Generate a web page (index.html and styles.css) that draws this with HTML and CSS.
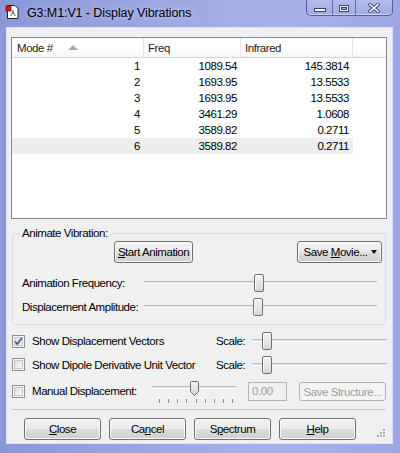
FILE: index.html
```html
<!DOCTYPE html>
<html>
<head>
<meta charset="utf-8">
<title>Display Vibrations</title>
<link rel="stylesheet" href="styles.css">
</head>
<body>
<div class="window">
  <div class="titlebar">
    <svg class="appicon" width="16" height="16" viewBox="0 0 16 16">
      <path d="M2.5 1.5h7.5l3 3v10h-10.5z" fill="#fff" stroke="#222" stroke-width="1"/>
      <path d="M8 8.5v-2.5M8 8.5l-2.5 3.5M8 8.5l2.5 3.5" stroke="#555" stroke-width="1" fill="none"/>
      <circle cx="8" cy="8.5" r="1.2" fill="#777"/>
      <rect x="1" y="2" width="5" height="5" fill="#e3101a" stroke="#8a0000" stroke-width="0.8"/>
    </svg>
    <span class="title">G3:M1:V1 - Display Vibrations</span>
    <div class="caption">
      <div class="cbtn cmin"><span class="g-min"></span></div>
      <div class="cbtn cmax"><span class="g-max"></span></div>
      <div class="cbtn cclose">
        <svg width="12" height="10" viewBox="0 0 12 10">
          <path d="M2 1.5l8 7M10 1.5l-8 7" stroke="#3b4468" stroke-width="3.4" stroke-linecap="square"/>
          <path d="M2 1.5l8 7M10 1.5l-8 7" stroke="#fff" stroke-width="1.6" stroke-linecap="square"/>
        </svg>
      </div>
    </div>
  </div>

  <div class="client">
    <div class="listview">
      <div class="lv-header">
        <div class="hcell c1">Mode #<span class="sort"></span></div>
        <div class="hcell c2">Freq</div>
        <div class="hcell c3">Infrared</div>
        <div class="hcell c4"></div>
      </div>
      <div class="lv-row"><div class="cell c1">1</div><div class="cell c2">1089.54</div><div class="cell c3">145.3814</div></div>
      <div class="lv-row"><div class="cell c1">2</div><div class="cell c2">1693.95</div><div class="cell c3">13.5533</div></div>
      <div class="lv-row"><div class="cell c1">3</div><div class="cell c2">1693.95</div><div class="cell c3">13.5533</div></div>
      <div class="lv-row"><div class="cell c1">4</div><div class="cell c2">3461.29</div><div class="cell c3">1.0608</div></div>
      <div class="lv-row"><div class="cell c1">5</div><div class="cell c2">3589.82</div><div class="cell c3">0.2711</div></div>
      <div class="lv-row sel"><div class="cell c1">6</div><div class="cell c2">3589.82</div><div class="cell c3">0.2711</div></div>
    </div>

    <fieldset class="group">
      <legend>Animate Vibration:</legend>
      <div class="btnrow">
        <button class="btn start"><span><u>S</u>tart Animation</span></button>
        <button class="btn movie"><span>Save <u>M</u>ovie...</span><span class="ddarrow"></span></button>
      </div>
      <div class="srow first">
        <span class="slabel">Animation Frequency:</span>
        <div class="slider"><span class="thumb t1"></span></div>
      </div>
      <div class="srow">
        <span class="slabel">Displacement Amplitude:</span>
        <div class="slider"><span class="thumb t2"></span></div>
      </div>
    </fieldset>

    <div class="options">
      <div class="orow">
        <div class="check">
          <span class="cb">
            <svg width="11" height="11" viewBox="0 0 11 11"><path d="M2 5.5l2.3 2.6l4.6-6" stroke="#4a5d8f" stroke-width="1.7" fill="none"/></svg>
          </span>
          <span>Show Displacement Vectors</span>
        </div>
        <span class="scale">Scale:</span>
        <div class="sslider"><span class="thumb ts"></span></div>
      </div>
      <div class="orow second">
        <div class="check"><span class="cb"></span><span>Show Dipole Derivative Unit Vector</span></div>
        <span class="scale">Scale:</span>
        <div class="sslider"><span class="thumb ts"></span></div>
      </div>
      <div class="mrow">
        <span class="cb"></span>
        <span class="mlabel">Manual Displacement:</span>
        <div class="mslider">
          <div class="mtrack">
            <svg class="pthumb" width="9" height="15" viewBox="0 0 9 15">
              <defs><linearGradient id="pg" x1="0" y1="0" x2="0" y2="1"><stop offset="0" stop-color="#f7f7f7"/><stop offset="1" stop-color="#d3d3d3"/></linearGradient></defs>
              <path d="M0.5 1.5q0-1 1-1h6q1 0 1 1v9l-4 4l-4-4z" fill="url(#pg)" stroke="#6f6f6f"/>
            </svg>
          </div>
          <div class="ticks"><span></span><span></span><span></span><span></span><span></span><span></span><span></span><span></span><span></span></div>
        </div>
        <div class="tbox">0.00</div>
        <button class="btn dis"><span>Save Structure...</span></button>
      </div>
    </div>

    <div class="sep"></div>

    <div class="brow">
      <button class="btn"><span><u>C</u>lose</span></button>
      <button class="btn"><span>Ca<u>n</u>cel</span></button>
      <button class="btn"><span>S<u>p</u>ectrum</span></button>
      <button class="btn"><span><u>H</u>elp</span></button>
      <svg class="grip" width="9" height="9" viewBox="0 0 9 9">
        <g fill="#fff"><rect x="7" y="1" width="2" height="2"/><rect x="4" y="4" width="2" height="2"/><rect x="7" y="4" width="2" height="2"/><rect x="1" y="7" width="2" height="2"/><rect x="4" y="7" width="2" height="2"/><rect x="7" y="7" width="2" height="2"/></g>
        <g fill="#a8acb2"><rect x="6" y="0" width="2" height="2"/><rect x="3" y="3" width="2" height="2"/><rect x="6" y="3" width="2" height="2"/><rect x="0" y="6" width="2" height="2"/><rect x="3" y="6" width="2" height="2"/><rect x="6" y="6" width="2" height="2"/></g>
      </svg>
    </div>
  </div>
</div>
</body>
</html>
```

FILE: styles.css
```css
* { box-sizing: border-box; }
html, body { margin: 0; padding: 0; }
body {
  width: 400px;
  height: 453px;
  overflow: hidden;
  font-family: "Liberation Sans", Arial, sans-serif;
  font-size: 11.5px;
  letter-spacing: -0.45px;
  color: #000;
}
.window {
  width: 400px;
  height: 453px;
  display: flex;
  flex-direction: column;
  background: linear-gradient(90deg, #8a97d9 0%, #9aa6e2 35%, #a8b2eb 70%, #9ca7e3 100%);
}

/* title bar */
.titlebar {
  height: 27px;
  flex-shrink: 0;
  display: flex;
  align-items: flex-start;
}
.appicon { margin: 4px 0 0 5px; flex-shrink: 0; }
.title {
  margin-left: 6px;
  line-height: 27px;
  font-size: 12.5px;
  letter-spacing: -0.1px;
  color: #000;
  text-shadow: 0 0 6px rgba(255,255,255,0.6);
}
.caption {
  margin-left: auto;
  margin-right: 7px;
  height: 16px;
  display: flex;
  border: 1px solid rgba(45, 55, 100, 0.65);
  border-top: none;
  border-radius: 0 0 5px 5px;
  overflow: hidden;
  background: linear-gradient(#b3bcee, #a0aae4);
  box-shadow: inset 0 -1px 0 rgba(255,255,255,0.45);
}
.cbtn {
  display: flex;
  align-items: center;
  justify-content: center;
  height: 15px;
}
.cmin { width: 25px; }
.cmax { width: 23px; border-left: 1px solid rgba(45, 55, 100, 0.55); }
.cclose { width: 37px; border-left: 1px solid rgba(45, 55, 100, 0.55); }
.g-min {
  width: 12px;
  height: 4px;
  margin-top: 5px;
  background: #fff;
  border: 1px solid #3b4468;
}
.g-max {
  width: 10px;
  height: 7px;
  margin-top: 1px;
  border: 1px solid #3b4468;
  box-shadow: inset 0 0 0 1px #fff, inset 0 0 0 2px #3b4468;
  background: #a6b0e8;
}

/* client */
.client {
  margin: 0 7px 0 6px;
  height: 417px;
  flex-shrink: 0;
  background: #f0f0f0;
  border: 1px solid #dde2f3;
  display: flex;
  flex-direction: column;
}

/* list view */
.listview {
  margin: 9px 5px 0 4px;
  height: 182px;
  flex-shrink: 0;
  border: 1px solid #828790;
  background: #fff;
}
.lv-header {
  display: flex;
  height: 20px;
  border-bottom: 1px solid #d5d5d5;
  background: linear-gradient(#ffffff 0%, #ffffff 55%, #f4f5f7 100%);
}
.hcell {
  height: 19px;
  display: flex;
  align-items: center;
  padding-left: 4px;
  border-right: 1px solid #e3e5e8;
  color: #1e1e1e;
}
.hcell.c1 { padding-left: 5px; }
.hcell.c4 { flex: 1; border-right: none; }
.c1 { width: 132px; }
.c2 { width: 97px; }
.c3 { width: 112px; }
.sort {
  width: 0;
  height: 0;
  margin-left: 15px;
  border-left: 5px solid transparent;
  border-right: 5px solid transparent;
  border-bottom: 5px solid #a7a7a7;
}
.lv-row {
  display: flex;
  height: 16px;
  width: 341px;
}
.lv-row.sel { background: #eeeeee; }
.cell {
  line-height: 16px;
  text-align: right;
  padding-right: 4px;
}

/* group */
.group {
  margin: 7px 6px 0 5px;
  padding: 0 3px 5px 9px;
  border: 1px solid #d5dfe5;
  border-radius: 3px;
  min-width: 0;
}
.group legend {
  padding: 0 2px;
  margin-left: -2px;
  line-height: 15px;
}
.btnrow {
  display: flex;
  height: 22px;
}
.btn {
  height: 22px;
  padding: 0;
  font-family: inherit;
  font-size: inherit;
  letter-spacing: inherit;
  color: #000;
  border: 1px solid #707070;
  border-radius: 3px;
  background: linear-gradient(#f2f2f2 0%, #ebebeb 48%, #dddddd 52%, #cfcfcf 100%);
  box-shadow: inset 0 0 0 1px #fbfbfb;
  display: flex;
  align-items: center;
  justify-content: center;
}
.btn.start { margin-left: 92px; width: 79px; }
.btn.movie { margin-left: auto; width: 85px; padding-left: 2px; }
.ddarrow {
  width: 0;
  height: 0;
  margin-left: 4px;
  border-left: 3.5px solid transparent;
  border-right: 3.5px solid transparent;
  border-top: 4px solid #000;
}
.srow {
  display: flex;
  align-items: center;
  height: 24px;
}
.srow.first { margin-top: 8px; }
.slabel { width: 122px; }
.slider, .sslider {
  height: 18px;
  display: flex;
  align-items: center;
  background: linear-gradient(to bottom,
    transparent 7px, #bcbcbc 7px, #bcbcbc 8px,
    #e4e4e4 8px, #e4e4e4 9px, #ffffff 9px, #ffffff 10px, transparent 10px);
}
.slider { width: 233px; }
.thumb {
  width: 10px;
  height: 18px;
  border: 1px solid #707070;
  border-radius: 2px;
  background: linear-gradient(#f6f6f6, #d6d6d6);
  box-shadow: inset 1px 1px 0 #ffffff;
}
.t1 { margin-left: 110px; }
.t2 { margin-left: 109px; }

/* options */
.options { margin: 4px 5px 0 5px; }
.orow {
  display: grid;
  grid-template-columns: 204px 36px 135px;
  align-items: center;
  height: 24px;
}
.orow.second { height: 23px; }
.check { display: flex; align-items: center; }
.cb {
  width: 13px;
  height: 13px;
  flex-shrink: 0;
  margin-right: 7px;
  border: 1px solid #8e8f8f;
  background: linear-gradient(135deg, #d9dce1, #fbfbfb);
  box-shadow: inset 0 0 0 1px #f6f6f6, inset 0 0 0 2px #c3c8ce;
  display: flex;
  align-items: center;
  justify-content: center;
}
.sslider { width: 135px; }
.ts { margin-left: 10px; }
.mrow {
  display: flex;
  align-items: flex-start;
  height: 22px;
  margin-top: 5px;
}
.mrow .cb { margin-top: 4px; }
.mlabel { width: 120px; line-height: 20px; }
.mslider { width: 84px; display: flex; flex-direction: column; }
.mtrack {
  height: 15px;
  display: flex;
  align-items: flex-start;
  background: linear-gradient(to bottom,
    transparent 5px, #bcbcbc 5px, #bcbcbc 6px,
    #e4e4e4 6px, #e4e4e4 7px, #ffffff 7px, #ffffff 8px, transparent 8px);
}
.pthumb { margin-left: 38px; display: block; }
.ticks {
  display: flex;
  justify-content: space-between;
  padding: 0 3px 0 7px;
  margin-top: 3px;
  height: 4px;
}
.ticks span { width: 1px; background: #8c8c8c; }
.tbox {
  margin: 1px 0 0 12px;
  width: 39px;
  height: 19px;
  border: 1px solid #b5b5b5;
  background: #f0f0f0;
  color: #9c9c9c;
  line-height: 17px;
  padding-left: 3px;
}
.btn.dis {
  margin: 1px 0 0 12px;
  width: 87px;
  height: 19px;
  color: #9c9c9c;
  border-color: #adb2b5;
  background: #f4f4f4;
  box-shadow: none;
}

.sep {
  margin: 6px 6px 0 5px;
  border-top: 1px solid #c9c9c9;
}
.brow {
  display: flex;
  gap: 8px;
  margin-top: 8px;
  padding-left: 17px;
  height: 22px;
}
.brow .btn { width: 77px; }
.grip {
  margin-left: auto;
  margin-right: 6px;
  margin-bottom: 2px;
  align-self: flex-end;
}
```
